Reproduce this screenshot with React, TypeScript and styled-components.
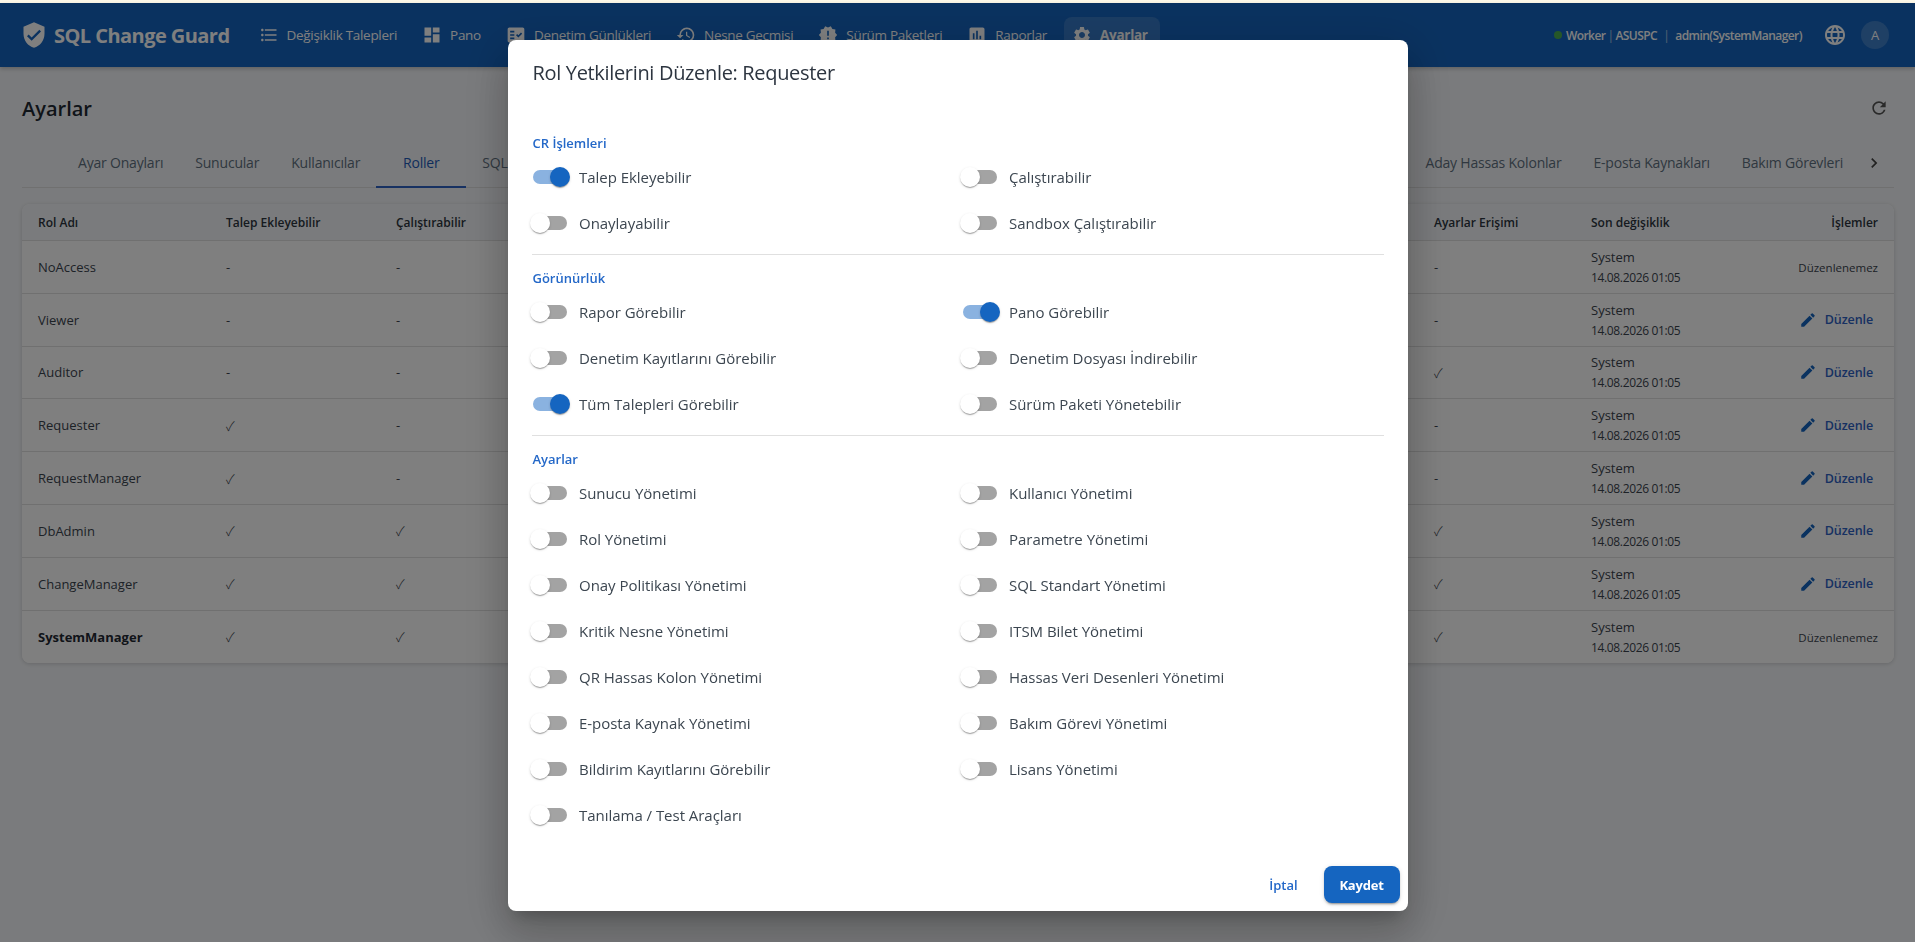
import * as React from 'react'
import styled, { createGlobalStyle } from 'styled-components'
import {
  MdVerifiedUser, MdFormatListBulleted, MdDashboard, MdFactCheck, MdHistory, MdNewReleases,
  MdAssessment, MdSettings, MdLanguage, MdRefresh, MdChevronRight, MdEdit,
} from 'react-icons/md'

const GlobalStyle = createGlobalStyle`
  html, body { margin: 0; height: 100%; overflow: hidden; background: #f5f7fa; }
  body { font-family: "Open Sans", "Noto Sans", sans-serif; color: #3a444e; }
  * { box-sizing: border-box; }
`

const TopStrip = styled.div`
  height: 3px;
  background: #fdf8e8;
`

const Header = styled.header`
  position: relative;
  height: 64px;
  display: flex;
  align-items: center;
  padding: 0 26px 0 20px;
  background: #1565c0;
  color: #fff;
  box-shadow: 0 2px 4px rgba(0,0,0,.2);
`

const Brand = styled.div`
  display: flex;
  align-items: center;
  gap: 6px;
  margin-right: 21px;
  font-size: 20px;
  font-weight: 700;
  letter-spacing: -0.55px;
  white-space: nowrap;
  svg { width: 28px; height: 28px; }
`

const Nav = styled.nav`
  display: flex;
  align-items: center;
  gap: 5px;
  flex: 1;
`

const NavItem = styled.a<{ $active?: boolean }>`
  display: flex;
  align-items: center;
  gap: 8px;
  height: 36px;
  padding: 0 12px 0 8px;
  border-radius: 8px;
  font-size: 13.5px;
  letter-spacing: -0.3px;
  white-space: nowrap;
  font-weight: ${p => (p.$active ? 700 : 400)};
  background: ${p => (p.$active ? 'rgba(255,255,255,.14)' : 'transparent')};
  svg { width: 20px; height: 20px; flex: none; }
`

const Status = styled.div`
  display: flex;
  align-items: center;
  font-size: 12px;
  font-weight: 600;
  letter-spacing: -0.55px;
  white-space: nowrap;
  margin-right: 21px;
`

const Dot = styled.span`
  width: 8px;
  height: 8px;
  border-radius: 50%;
  background: #4caf50;
  margin-right: 4px;
`

const Sep = styled.span<{ $wide?: boolean }>`
  margin: 0 ${p => (p.$wide ? '6px' : '2px')};
  font-weight: 400;
  opacity: .6;
`

const GlobeButton = styled.span`
  display: flex;
  margin-right: 14px;
  svg { width: 24px; height: 24px; }
`

const Avatar = styled.span`
  width: 28px;
  height: 28px;
  border-radius: 50%;
  display: flex;
  align-items: center;
  justify-content: center;
  font-size: 13px;
  background: rgba(255,255,255,.18);
`

const Main = styled.main`
  padding: 24px 21px 0 22px;
`

const TitleRow = styled.div`
  height: 34px;
  display: flex;
  align-items: center;
  justify-content: space-between;
  margin-bottom: 14px;
  svg { width: 20px; height: 20px; color: #555; margin-right: 5px; }
`

const PageTitle = styled.h1`
  margin: 0;
  font-size: 20px;
  font-weight: 600;
  color: #1f2933;
`

const TabRail = styled.div`
  display: flex;
  height: 49px;
  border-bottom: 1px solid #e0e0e0;
`

const TabEdge = styled.div`
  width: 40px;
  flex: none;
  display: flex;
  align-items: center;
  justify-content: center;
  color: #444;
  svg { width: 20px; height: 20px; }
`

const TabGroups = styled.div`
  flex: 1;
  display: flex;
  justify-content: space-between;
`

const TabGroup = styled.div<{ $end?: boolean }>`
  display: flex;
  margin-right: ${p => (p.$end ? '-5px' : '0')};
`

const Tab = styled.div<{ $active?: boolean }>`
  min-width: 90px;
  padding: 0 16px;
  display: flex;
  align-items: center;
  justify-content: center;
  font-size: 14px;
  font-weight: 500;
  letter-spacing: -0.2px;
  white-space: nowrap;
  color: ${p => (p.$active ? '#1e5bb8' : '#5f7080')};
  border-bottom: 2px solid ${p => (p.$active ? '#2f62c4' : 'transparent')};
  height: 49px;
`

const TableCard = styled.section`
  margin-top: 16px;
  background: #fff;
  border-radius: 8px;
  overflow: hidden;
  box-shadow: 0 1px 4px rgba(0,0,0,.16);
`

const Row = styled.div<{ $head?: boolean }>`
  display: grid;
  grid-template-columns: 188px 170px 1fr 157px 160px 159px;
  align-items: center;
  height: ${p => (p.$head ? '37px' : '52.8px')};
  background: ${p => (p.$head ? '#f5f7fa' : '#fff')};
  border-bottom: 1px solid #e0e0e0;
  &:last-child { border-bottom: 0; }
  font-size: ${p => (p.$head ? '12px' : '13px')};
  font-weight: ${p => (p.$head ? 600 : 400)};
  color: ${p => (p.$head ? '#2c353e' : 'inherit')};
`

const Cell = styled.div<{ $bold?: boolean; $right?: boolean }>`
  padding: 0 16px;
  white-space: nowrap;
  font-weight: ${p => (p.$bold ? 700 : 'inherit')};
  color: ${p => (p.$bold ? '#1f2933' : 'inherit')};
  text-align: ${p => (p.$right ? 'right' : 'left')};
`

const CheckMark = styled.span`
  font-family: "Noto Sans CJK JP", "DejaVu Sans", sans-serif;
  font-size: 13px;
  font-weight: 300;
`

const DateLine = styled.div`
  font-size: 12px;
  letter-spacing: -0.35px;
  margin-top: 3px;
`

const EditAction = styled.a`
  display: flex;
  justify-content: flex-end;
  align-items: center;
  gap: 8px;
  font-weight: 600;
  font-size: 12.5px;
  letter-spacing: -0.1px;
  color: #2f62c4;
  padding-right: 5px;
  svg { width: 18px; height: 18px; color: #1565c0; }
`

const Locked = styled.span`
  font-size: 11.5px;
`

const Overlay = styled.div`
  position: fixed;
  left: 0;
  right: 0;
  top: 3px;
  bottom: 0;
  background: rgba(0,0,0,.5);
  display: flex;
  justify-content: center;
  align-items: flex-start;
  padding-top: 37px;
`

const Dialog = styled.div`
  width: 900px;
  height: 871px;
  background: #fff;
  border-radius: 8px;
  display: flex;
  flex-direction: column;
  box-shadow: 0 11px 15px -7px rgba(0,0,0,.2), 0 24px 38px 3px rgba(0,0,0,.14), 0 9px 46px 8px rgba(0,0,0,.12);
`

const DialogTitle = styled.h2`
  margin: 0;
  padding: 16px 24px 16px 25px;
  font-size: 20px;
  line-height: 34px;
  font-weight: 500;
  letter-spacing: -0.33px;
  color: #2d3540;
`

const DialogBody = styled.div`
  padding: 27px 24px 0;
`

const SectionLabel = styled.div`
  padding-left: 1px;
  font-size: 13px;
  line-height: 20px;
  font-weight: 600;
  color: #2468c8;
  margin-bottom: 5px;
`

const Divider = styled.hr`
  border: 0;
  height: 1px;
  background: #e0e0e0;
  margin: 12px 0 13px;
`

const ToggleGrid = styled.div`
  display: grid;
  grid-template-columns: 430px 1fr;
  row-gap: 8px;
`

const ToggleRow = styled.label`
  display: flex;
  align-items: center;
  height: 38px;
  margin-left: -11px;
  font-size: 15px;
  letter-spacing: -0.03px;
  color: #3c4650;
`

const SwitchBox = styled.span`
  position: relative;
  width: 58px;
  height: 38px;
  flex: none;
  margin-right: 0.5px;
`

const Track = styled.span<{ $on: boolean }>`
  position: absolute;
  left: 12px;
  top: 12px;
  width: 34px;
  height: 14px;
  border-radius: 7px;
  background: ${p => (p.$on ? '#8ab2e0' : '#a3a3a3')};
`

const Thumb = styled.span<{ $on: boolean }>`
  position: absolute;
  top: 9px;
  left: ${p => (p.$on ? '29px' : '9px')};
  width: 20px;
  height: 20px;
  border-radius: 50%;
  background: ${p => (p.$on ? '#1565c0' : '#fff')};
  box-shadow: 0 2px 1px -1px rgba(0,0,0,.2), 0 1px 1px rgba(0,0,0,.14), 0 1px 3px rgba(0,0,0,.12);
`

const DialogFooter = styled.div`
  margin-top: auto;
  padding: 8px;
  display: flex;
  justify-content: flex-end;
  align-items: center;
  gap: 8px;
`

const CancelButton = styled.button`
  min-width: 64px;
  height: 37px;
  border: 0;
  background: transparent;
  font: 600 13px "Open Sans", sans-serif;
  color: #2468c8;
`

const SaveButton = styled.button`
  width: 76px;
  height: 37px;
  border: 0;
  border-radius: 8px;
  background: #1565c0;
  color: #fff;
  font: 700 13px "Open Sans", sans-serif;
  letter-spacing: -0.2px;
  box-shadow: 0 3px 1px -2px rgba(0,0,0,.2), 0 2px 2px rgba(0,0,0,.14), 0 1px 5px rgba(0,0,0,.12);
`

const navItems = [
  { label: 'Değişiklik Talepleri', icon: <MdFormatListBulleted /> },
  { label: 'Pano', icon: <MdDashboard /> },
  { label: 'Denetim Günlükleri', icon: <MdFactCheck /> },
  { label: 'Nesne Geçmisi', icon: <MdHistory /> },
  { label: 'Sürüm Paketleri', icon: <MdNewReleases /> },
  { label: 'Raporlar', icon: <MdAssessment /> },
  { label: 'Ayarlar', icon: <MdSettings />, active: true },
]

// y = Talep, c = Çalıştır, a = Ayarlar
const roles = [
  { name: 'NoAccess', y: 0, c: 0, a: 0, locked: true },
  { name: 'Viewer', y: 0, c: 0, a: 0 },
  { name: 'Auditor', y: 0, c: 0, a: 1 },
  { name: 'Requester', y: 1, c: 0, a: 0 },
  { name: 'RequestManager', y: 1, c: 0, a: 0 },
  { name: 'DbAdmin', y: 1, c: 1, a: 1 },
  { name: 'ChangeManager', y: 1, c: 1, a: 1 },
  { name: 'SystemManager', y: 1, c: 1, a: 1, locked: true, bold: true },
]

const sections = [
  {
    title: 'CR İşlemleri',
    items: [['Talep Ekleyebilir', true], ['Çalıştırabilir', false], ['Onaylayabilir', false], ['Sandbox Çalıştırabilir', false]],
  },
  {
    title: 'Görünürlük',
    items: [
      ['Rapor Görebilir', false], ['Pano Görebilir', true],
      ['Denetim Kayıtlarını Görebilir', false], ['Denetim Dosyası İndirebilir', false],
      ['Tüm Talepleri Görebilir', true], ['Sürüm Paketi Yönetebilir', false],
    ],
  },
  {
    title: 'Ayarlar',
    items: [
      ['Sunucu Yönetimi', false], ['Kullanıcı Yönetimi', false],
      ['Rol Yönetimi', false], ['Parametre Yönetimi', false],
      ['Onay Politikası Yönetimi', false], ['SQL Standart Yönetimi', false],
      ['Kritik Nesne Yönetimi', false], ['ITSM Bilet Yönetimi', false],
      ['QR Hassas Kolon Yönetimi', false], ['Hassas Veri Desenleri Yönetimi', false],
      ['E-posta Kaynak Yönetimi', false], ['Bakım Görevi Yönetimi', false],
      ['Bildirim Kayıtlarını Görebilir', false], ['Lisans Yönetimi', false],
      ['Tanılama / Test Araçları', false],
    ],
  },
] as { title: string; items: [string, boolean][] }[]

const mark = (v: number) => (v ? <CheckMark>✓</CheckMark> : '-')

export default function App() {
  return (
    <>
      <GlobalStyle />
      <TopStrip />
      <Header>
        <Brand><MdVerifiedUser />SQL Change Guard</Brand>
        <Nav>
          {navItems.map(n => (
            <NavItem key={n.label} $active={n.active}>{n.icon}{n.label}</NavItem>
          ))}
        </Nav>
        <Status>
          <Dot />Worker<Sep>|</Sep>ASUSPC<Sep $wide>|</Sep>admin(SystemManager)
        </Status>
        <GlobeButton><MdLanguage /></GlobeButton>
        <Avatar>A</Avatar>
      </Header>

      <Main>
        <TitleRow>
          <PageTitle>Ayarlar</PageTitle>
          <MdRefresh />
        </TitleRow>
        <TabRail>
          <TabEdge />
          <TabGroups>
            <TabGroup>
              <Tab>Ayar Onayları</Tab>
              <Tab>Sunucular</Tab>
              <Tab>Kullanıcılar</Tab>
              <Tab $active>Roller</Tab>
              <Tab>SQL Standartları</Tab>
            </TabGroup>
            <TabGroup $end>
              <Tab>Aday Hassas Kolonlar</Tab>
              <Tab>E-posta Kaynakları</Tab>
              <Tab>Bakım Görevleri</Tab>
            </TabGroup>
          </TabGroups>
          <TabEdge><MdChevronRight /></TabEdge>
        </TabRail>
        <TableCard>
          <Row $head>
            <Cell>Rol Adı</Cell>
            <Cell>Talep Ekleyebilir</Cell>
            <Cell>Çalıştırabilir</Cell>
            <Cell>Ayarlar Erişimi</Cell>
            <Cell>Son değişiklik</Cell>
            <Cell $right>İşlemler</Cell>
          </Row>
          {roles.map(r => (
            <Row key={r.name}>
              <Cell $bold={r.bold}>{r.name}</Cell>
              <Cell>{mark(r.y)}</Cell>
              <Cell>{mark(r.c)}</Cell>
              <Cell>{mark(r.a)}</Cell>
              <Cell>System<DateLine>14.08.2026 01:05</DateLine></Cell>
              <Cell $right>
                {r.locked ? <Locked>Düzenlenemez</Locked> : <EditAction><MdEdit />Düzenle</EditAction>}
              </Cell>
            </Row>
          ))}
        </TableCard>
      </Main>

      <Overlay>
        <Dialog>
          <DialogTitle>Rol Yetkilerini Düzenle: Requester</DialogTitle>
          <DialogBody>
            {sections.map((s, i) => (
              <React.Fragment key={s.title}>
                {i > 0 && <Divider />}
                <SectionLabel>{s.title}</SectionLabel>
                <ToggleGrid>
                  {s.items.map(([label, on]) => (
                    <ToggleRow key={label}>
                      <SwitchBox><Track $on={on} /><Thumb $on={on} /></SwitchBox>
                      {label}
                    </ToggleRow>
                  ))}
                </ToggleGrid>
              </React.Fragment>
            ))}
          </DialogBody>
          <DialogFooter>
            <CancelButton>İptal</CancelButton>
            <SaveButton>Kaydet</SaveButton>
          </DialogFooter>
        </Dialog>
      </Overlay>
    </>
  )
}
